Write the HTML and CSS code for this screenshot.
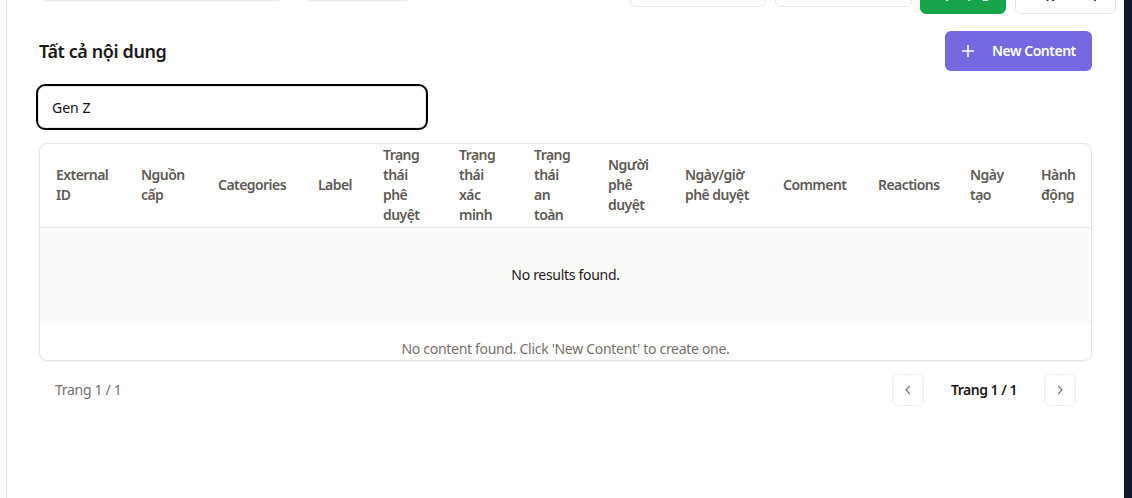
FILE: index.html
```html
<!DOCTYPE html>
<html lang="vi">
<head>
<meta charset="utf-8">
<title>Tất cả nội dung</title>
<link rel="stylesheet" href="styles.css">
</head>
<body>
<div class="app">
  <div class="rail"></div>
  <main class="main">
    <div class="toolbar">
      <div class="filters">
        <div class="field f1"></div>
        <div class="field f2"></div>
      </div>
      <div class="actions">
        <button class="btn outline w136 lift">Bộ lọc</button>
        <button class="btn outline w137 lift">Sắp xếp</button>
        <button class="btn green">Áp dụng</button>
        <button class="btn outline w101">Nhập dữ liệu</button>
      </div>
    </div>

    <section class="content">
      <div class="head">
        <h1 class="title">Tất cả nội dung</h1>
        <button class="btn-new">
          <svg class="plus" width="12" height="12" viewBox="0 0 12 12" aria-hidden="true"><path d="M6 0.5v11M0.5 6h11" stroke="currentColor" stroke-width="1.6" fill="none" stroke-linecap="round"/></svg>
          <span>New Content</span>
        </button>
      </div>

      <input class="search" type="text" value="Gen Z">

      <div class="card">
        <table class="grid">
          <colgroup>
            <col style="width:85px"><col style="width:77px"><col style="width:100px"><col style="width:65px">
            <col style="width:76px"><col style="width:75px"><col style="width:74px"><col style="width:77px">
            <col style="width:98px"><col style="width:95px"><col style="width:92px"><col style="width:71px">
            <col style="width:66px">
          </colgroup>
          <caption class="note">No content found. Click 'New Content' to create one.</caption>
          <thead>
            <tr>
              <th>External ID</th>
              <th>Nguồn cấp</th>
              <th>Categories</th>
              <th>Label</th>
              <th>Trạng thái phê duyệt</th>
              <th>Trạng thái xác minh</th>
              <th class="narrow">Trạng thái an toàn</th>
              <th>Người phê duyệt</th>
              <th>Ngày/giờ phê duyệt</th>
              <th>Comment</th>
              <th>Reactions</th>
              <th>Ngày tạo</th>
              <th>Hành động</th>
            </tr>
          </thead>
          <tbody>
            <tr><td class="empty" colspan="13">No results found.</td></tr>
          </tbody>
        </table>
      </div>

      <div class="pager">
        <span class="pager-info">Trang 1 / 1</span>
        <div class="pager-nav">
          <button class="page-btn" aria-label="Trang trước">
            <svg width="12" height="12" viewBox="0 0 12 12"><path d="M7.5 2.5L4 6l3.5 3.5" stroke="currentColor" stroke-width="1.3" fill="none" stroke-linecap="round" stroke-linejoin="round"/></svg>
          </button>
          <span class="pager-current">Trang 1 / 1</span>
          <button class="page-btn" aria-label="Trang sau">
            <svg width="12" height="12" viewBox="0 0 12 12"><path d="M4.5 2.5L8 6l-3.5 3.5" stroke="currentColor" stroke-width="1.3" fill="none" stroke-linecap="round" stroke-linejoin="round"/></svg>
          </button>
        </div>
      </div>
    </section>
  </main>
  <div class="darkbar"></div>
</div>
</body>
</html>
```
FILE: styles.css
```css
* { box-sizing: border-box; }
html, body { margin: 0; padding: 0; background: #fff; }
body {
  font-family: "Noto Sans", "Open Sans", sans-serif;
  font-size: 14px;
  line-height: 20px;
  letter-spacing: -0.3px;
  color: #1c1917;
  overflow: hidden;
}
.app {
  display: flex;
  height: 498px;
  overflow: hidden;
}
.rail { width: 6px; flex: none; background: #fff; }
.main {
  flex: 1;
  min-width: 0;
  border-left: 1px solid #e5e7eb;
  display: flex;
  flex-direction: column;
}
.darkbar { width: 8px; flex: none; background: #111827; }

/* top toolbar (scrolled mostly out of view) */
.toolbar {
  display: flex;
  align-items: flex-end;
  justify-content: space-between;
  height: 54px;
  margin-top: -40px;
  padding: 0 8px 0 34px;
}
.filters { display: flex; gap: 22px; margin-bottom: 14px; }
.field {
  height: 38px;
  border: 1px solid #e5e7eb;
  border-radius: 6px;
  background: #fff;
  box-shadow: 0 1px 2px rgba(0,0,0,0.12);
}
.f1 { width: 242px; }
.f2 { width: 106px; }
.actions { display: flex; align-items: flex-end; gap: 8px; }
.btn {
  font: inherit;
  font-weight: 600;
  letter-spacing: -0.5px;
  height: 40px;
  border-radius: 6px;
  padding: 0 12px 2px;
  display: flex;
  align-items: center;
  justify-content: center;
  white-space: nowrap;
  cursor: pointer;
}
.outline { background: #fff; border: 1px solid #e5e7eb; color: #1c1917; }
.green { background: #16a34a; border: 1px solid #16a34a; color: #fff; width: 86px; }
.w136 { width: 136px; margin-right: 1px; }
.w137 { width: 137px; }
.w101 { width: 101px; margin-left: 1px; }
.lift { margin-bottom: 7px; }

/* content */
.content {
  padding: 0 32px;
  display: flex;
  flex-direction: column;
}
.head {
  margin-top: 17px;
  height: 40px;
  display: flex;
  align-items: center;
  justify-content: space-between;
}
.title {
  margin: 0;
  font-size: 18px;
  line-height: 28px;
  font-weight: 600;
  letter-spacing: -0.4px;
  color: #1c1917;
}
.btn-new {
  font: inherit;
  font-weight: 600;
  letter-spacing: -0.5px;
  white-space: nowrap;
  width: 147px;
  height: 40px;
  border: 0;
  border-radius: 6px;
  background: #7469e0;
  color: #fff;
  display: flex;
  align-items: center;
  gap: 18px;
  padding: 0 12px 0 17px;
  cursor: pointer;
}
.plus { flex: none; }

.search {
  margin-top: 15px;
  margin-left: -1px;
  width: 388px;
  height: 42px;
  font: inherit;
  color: #111;
  padding: 0 13px;
  border: 1px solid #e7e5e4;
  border-radius: 7px;
  outline: 2px solid #000;
  outline-offset: 0;
  background: #fff;
}

.card {
  margin-top: 15px;
  border: 1px solid #e7e5e4;
  border-radius: 8px;
  overflow: hidden;
  box-shadow: 0 1px 2px rgba(0,0,0,0.06);
}
.grid {
  width: 100%;
  table-layout: fixed;
  border-collapse: collapse;
}
.grid th {
  text-align: left;
  vertical-align: middle;
  font-weight: 600;
  letter-spacing: -0.55px;
  color: #5f5a55;
  padding: 1px 16px 2px;
  border-bottom: 1px solid #e7e5e4;
}
.grid th.narrow { padding-right: 22px; }
.empty {
  text-align: center;
  background: #fafaf9;
  padding: 37px 16px 38px;
  color: #1c1917;
}
.note {
  caption-side: bottom;
  padding: 16px 0 1px;
  color: #78716c;
  text-align: center;
}

.pager {
  margin-top: 13px;
  height: 32px;
  padding: 0 16px;
  display: flex;
  align-items: center;
  justify-content: space-between;
}
.pager-info { color: #78716c; }
.pager-nav { display: flex; align-items: center; gap: 27px; }
.page-btn {
  width: 32px;
  height: 32px;
  border: 1px solid #efedec;
  border-radius: 6px;
  background: #fff;
  color: #78716c;
  display: flex;
  align-items: center;
  justify-content: center;
  padding: 0;
}
.pager-current { font-weight: 600; letter-spacing: -0.5px; color: #1c1917; }
```
